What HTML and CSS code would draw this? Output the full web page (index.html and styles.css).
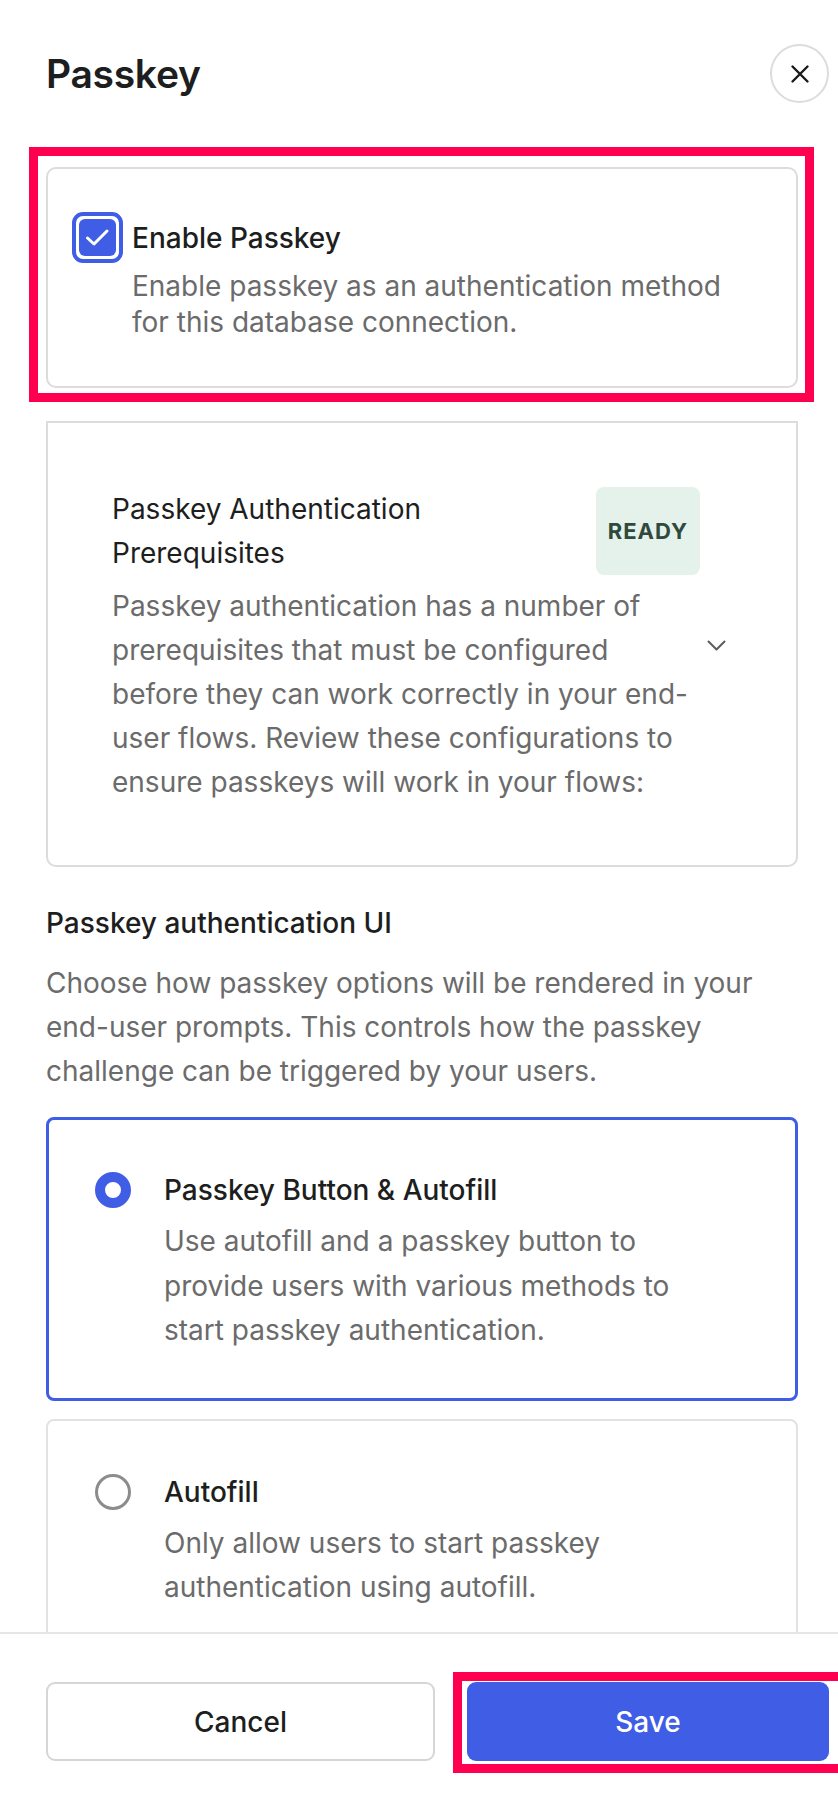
FILE: index.html
```html
<!DOCTYPE html>
<html lang="en">
  <head>
    <meta charset="UTF-8" />
    <meta name="viewport" content="width=device-width, initial-scale=1.0" />
    <title>Passkey</title>
    <link rel="stylesheet" href="styles.css">
  </head>
  <body>
    <div class="modal">
      <div class="header">
        <h1>Passkey</h1>
        <button class="close-btn" aria-label="Close">
          <svg width="20" height="20" viewBox="0 0 20 20">
            <path d="M2.5 2.5 L17.5 17.5 M17.5 2.5 L2.5 17.5" stroke="#1a1a1a" stroke-width="2.4" stroke-linecap="round" fill="none" />
          </svg>
        </button>
      </div>

      <div class="content">
        <div class="marked">
          <div class="card enable-card">
            <div class="check-row">
              <span class="checkbox">
                <span class="checkbox-box">
                  <svg width="37" height="37" viewBox="0 0 37 37">
                    <path d="M8.5 19 L15 25 L28 12" stroke="#fff" stroke-width="3" stroke-linecap="round" stroke-linejoin="round" fill="none" />
                  </svg>
                </span>
              </span>
              <label class="check-label">Enable Passkey</label>
            </div>
            <p class="check-desc">Enable passkey as an authentication method for this database connection.</p>
          </div>
          <div class="mark mark-card"></div>
        </div>

        <div class="card prereq-card">
          <div class="prereq-main">
            <div class="prereq-head">
              <div class="prereq-title">Passkey Authentication Prerequisites</div>
              <span class="badge">READY</span>
            </div>
            <p class="prereq-desc">Passkey authentication has a number of prerequisites that must be configured before they can work correctly in your end-user flows. Review these configurations to ensure passkeys will work in your flows:</p>
          </div>
          <div class="chevron">
            <svg width="19" height="11" viewBox="0 0 19 11">
              <path d="M1.5 1.5 L9.5 9.5 L17.5 1.5" stroke="#5c5c5c" stroke-width="2" stroke-linecap="round" stroke-linejoin="round" fill="none" />
            </svg>
          </div>
        </div>

        <h2 class="section-title">Passkey authentication UI</h2>
        <p class="section-desc">Choose how passkey options will be rendered in your end-user prompts. This controls how the passkey challenge can be triggered by your users.</p>

        <div class="radio-card selected">
          <span class="radio"></span>
          <div class="radio-text">
            <div class="radio-label">Passkey Button &amp; Autofill</div>
            <p class="radio-desc">Use autofill and a passkey button to provide users with various methods to start passkey authentication.</p>
          </div>
        </div>

        <div class="radio-card">
          <span class="radio"></span>
          <div class="radio-text">
            <div class="radio-label">Autofill</div>
            <p class="radio-desc">Only allow users to start passkey authentication using autofill.</p>
          </div>
        </div>
      </div>

      <div class="footer">
        <button class="btn btn-cancel">Cancel</button>
        <div class="save-wrap">
          <button class="btn btn-save">Save</button>
          <div class="mark mark-save"></div>
        </div>
      </div>
    </div>
  </body>
</html>
```

FILE: styles.css
```css
html,
body {
  margin: 0;
  overflow: hidden;
}

body {
  font-family: Inter, "Noto Sans", sans-serif;
  color: #1d1e20;
  background-color: #fff;
}

.modal {
  height: 100vh;
  display: flex;
  flex-direction: column;
}

/* header */

.header {
  display: flex;
  align-items: center;
  justify-content: space-between;
  padding: 44px 9px 0 46px;
}

h1 {
  margin: 0;
  font-size: 39px;
  font-weight: 600;
  letter-spacing: -0.3px;
}

.close-btn {
  width: 59px;
  height: 59px;
  border: 2px solid #dcdcdc;
  border-radius: 50%;
  background: #fff;
  display: flex;
  align-items: center;
  justify-content: center;
  padding: 0;
}

/* scroll area */

.content {
  flex: 1;
  overflow: hidden;
  padding: 64px 40px 0 46px;
}

.card {
  border: 2px solid #dcdcdc;
  border-radius: 10px;
  background: #fff;
}

.marked {
  position: relative;
}

.mark {
  position: absolute;
  border: 9px solid #ff0050;
  pointer-events: none;
}

.mark-card {
  top: -20px;
  left: -17px;
  right: -16px;
  bottom: -14px;
}

/* enable passkey */

.enable-card {
  padding: 43px 60px 46px 24px;
}

.check-row {
  display: flex;
  align-items: center;
  gap: 9px;
}

.checkbox {
  width: 51px;
  height: 51px;
  box-sizing: border-box;
  border: 4.5px solid #405de6;
  border-radius: 11px;
  padding: 2.5px;
  flex-shrink: 0;
}

.checkbox-box {
  display: block;
  width: 37px;
  height: 37px;
  background: #405de6;
  border-radius: 6px;
}

.checkbox-box svg {
  display: block;
}

.check-label {
  font-size: 28px;
  font-weight: 500;
  line-height: 36px;
}

.check-desc {
  margin: 5px 0 0 60px;
  font-size: 28px;
  line-height: 36px;
  color: #6b6b6b;
}

/* prerequisites */

.prereq-card {
  margin-top: 33px;
  display: flex;
  align-items: center;
  padding: 64px 64px 61px 64px;
  border-top-left-radius: 0;
  border-top-right-radius: 0;
}

.prereq-main {
  flex: 1;
}

.prereq-head {
  display: flex;
  gap: 12px;
}

.prereq-title {
  flex: 1;
  font-size: 28px;
  line-height: 44px;
}

.badge {
  display: flex;
  align-items: center;
  padding: 0 12px;
  background: #e5f2eb;
  color: #2f4a3c;
  border-radius: 8px;
  font-size: 22px;
  font-weight: 700;
  letter-spacing: 1px;
}

.prereq-desc {
  margin: 9px 0 0 0;
  font-size: 28px;
  line-height: 44px;
  color: #6b6b6b;
}

.chevron {
  width: 32px;
  display: flex;
  justify-content: center;
}

/* authentication ui */

.section-title {
  margin: 34px 0 0 0;
  font-size: 28px;
  font-weight: 500;
  line-height: 44px;
}

.section-desc {
  margin: 16px 0 0 0;
  font-size: 28px;
  line-height: 44px;
  color: #6b6b6b;
}

.radio-card {
  display: flex;
  gap: 33px;
  margin-top: 18px;
  padding: 49px 80px 46px 47px;
  border: 2px solid #e2e2e2;
  border-radius: 8px;
}

.radio-card.selected {
  margin-top: 24px;
  border: 3px solid #405de6;
  padding: 48px 79px 45px 46px;
}

.radio {
  width: 36px;
  height: 36px;
  box-sizing: border-box;
  border: 3px solid #8c8c8c;
  border-radius: 50%;
  margin-top: 4px;
  flex-shrink: 0;
}

.selected .radio {
  border: 10px solid #405de6;
}

.radio-label {
  font-size: 28px;
  font-weight: 500;
  line-height: 44px;
}

.radio-desc {
  margin: 7px 0 0 0;
  font-size: 28px;
  line-height: 44.5px;
  color: #6b6b6b;
}

/* footer */

.footer {
  display: flex;
  align-items: flex-start;
  gap: 32px;
  height: 178px;
  box-sizing: border-box;
  padding: 48px 9px 0 46px;
  border-top: 2px solid #e6e6e6;
  background: #fff;
}

.btn {
  height: 79px;
  border-radius: 9px;
  font-family: Inter, "Noto Sans", sans-serif;
  font-size: 28px;
  font-weight: 500;
  cursor: pointer;
}

.btn-cancel {
  width: 389px;
  background: #fff;
  color: #1d1e20;
  border: 2px solid #d6d6d6;
}

.save-wrap {
  flex: 1;
  position: relative;
  display: flex;
}

.btn-save {
  flex: 1;
  background: #405de6;
  color: #fff;
  border: none;
}

.mark-save {
  top: -10px;
  left: -14px;
  right: -24px;
  bottom: -12px;
}
```
